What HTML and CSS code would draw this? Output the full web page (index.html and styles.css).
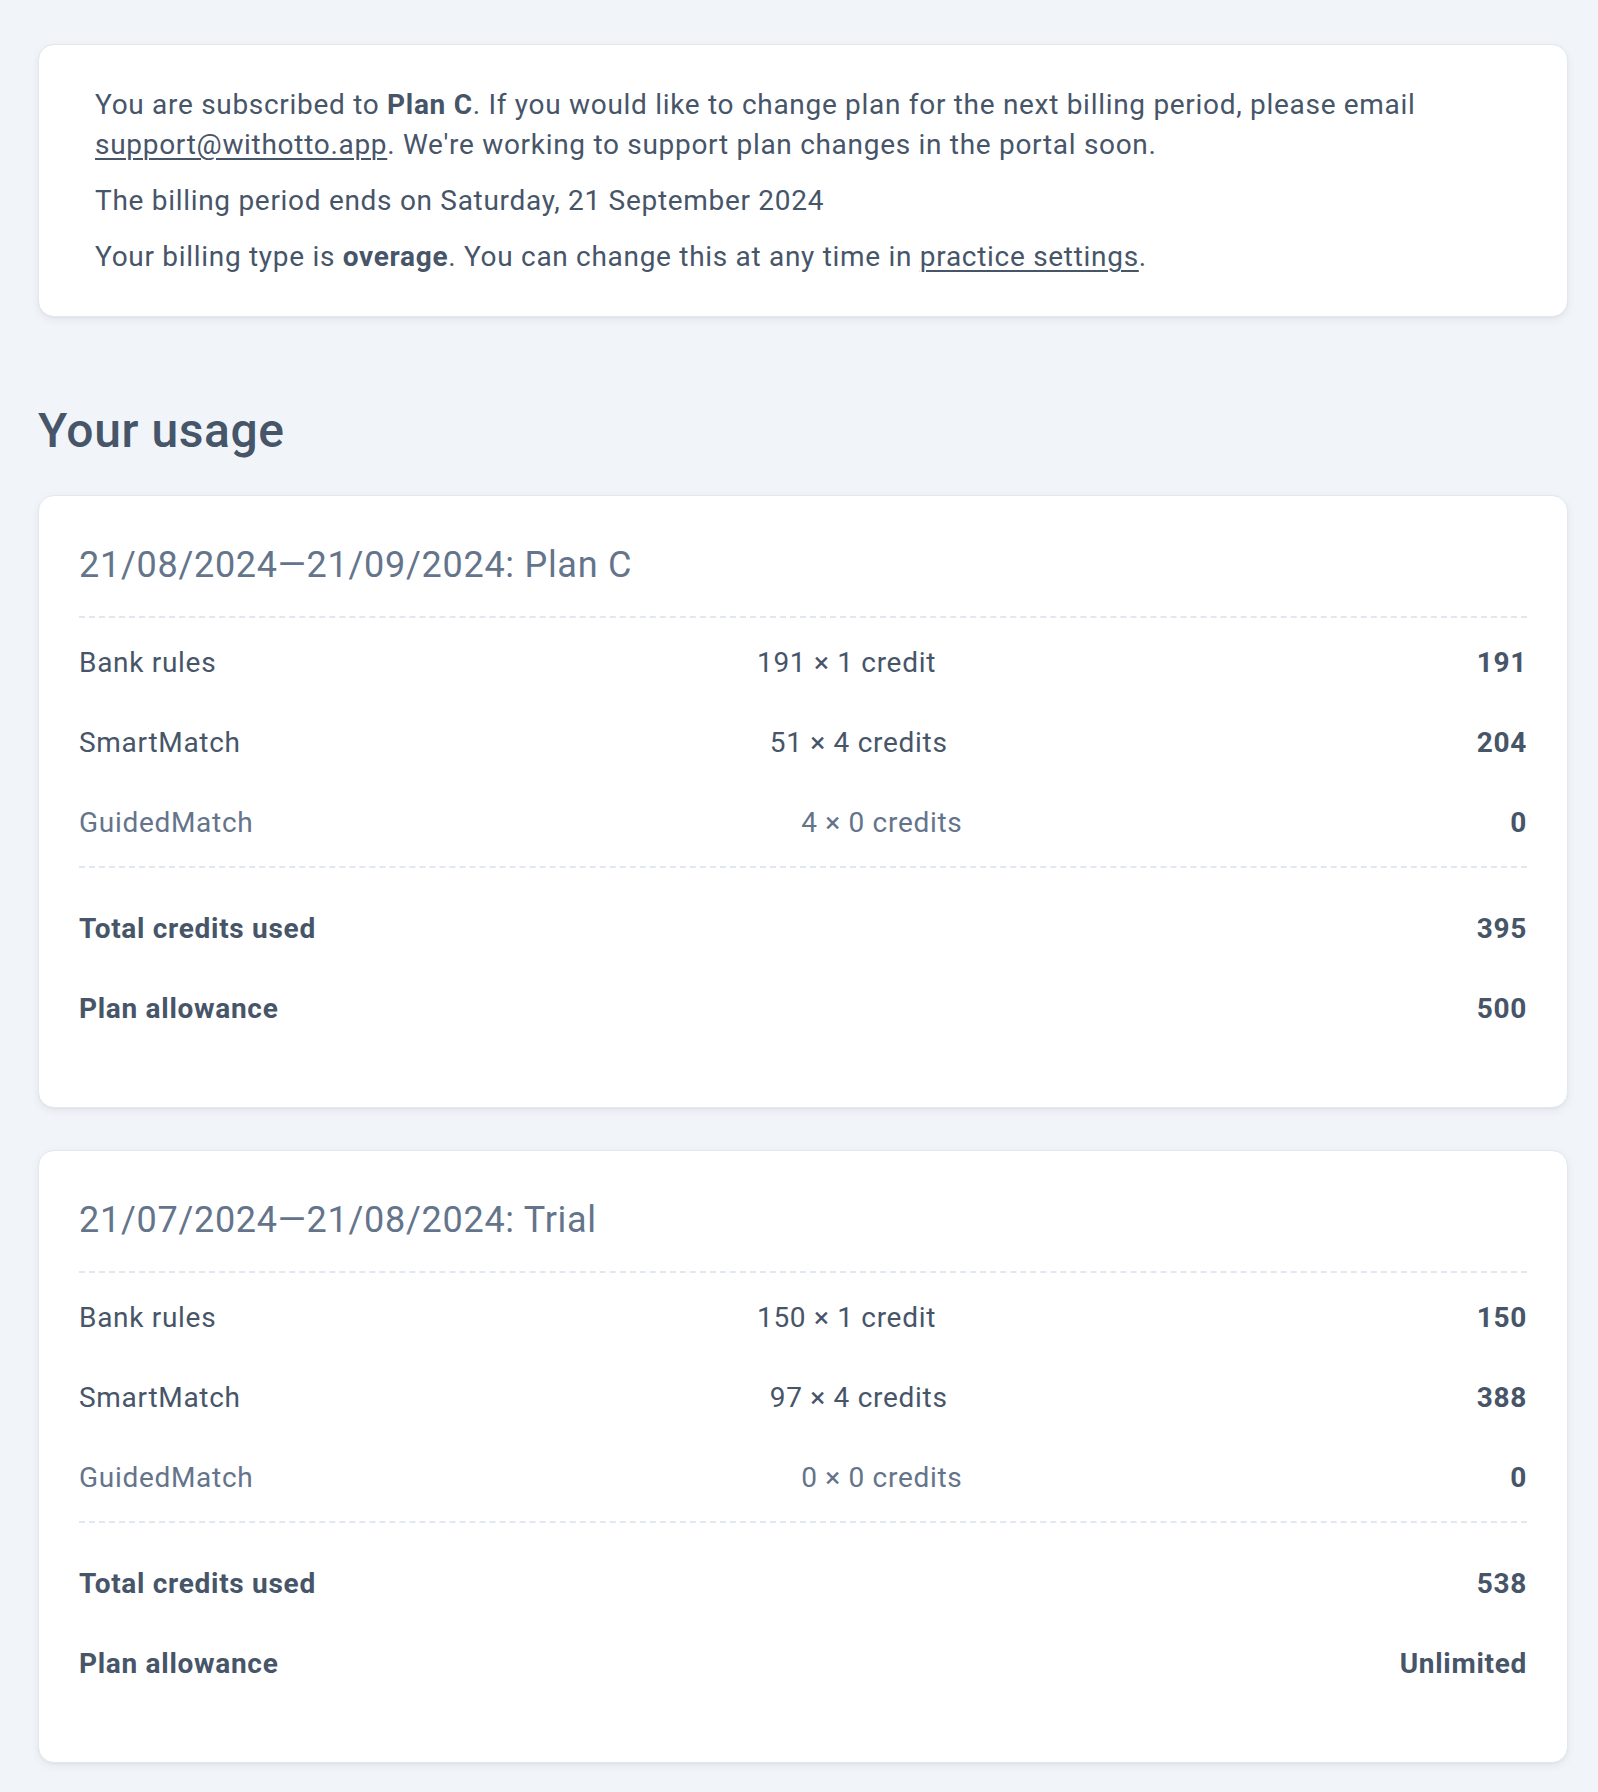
FILE: index.html
```html
<!DOCTYPE html>
<html lang="en">
<head>
<meta charset="utf-8">
<title>Billing</title>
<link rel="stylesheet" href="styles.css">
</head>
<body>
<main class="page">
  <section class="card info-card">
    <p>You are subscribed to <strong>Plan C</strong>. If you would like to change plan for the next billing period, please email <a href="#">support@withotto.app</a>. We're working to support plan changes in the portal soon.</p>
    <p>The billing period ends on Saturday, 21 September 2024</p>
    <p>Your billing type is <strong>overage</strong>. You can change this at any time in <a href="#">practice settings</a>.</p>
  </section>

  <h2 class="section-title">Your usage</h2>

  <section class="card usage-card">
    <h3 class="period-title">21/08/2024—21/09/2024: Plan C</h3>
    <div class="usage-lines">
      <div class="line"><span>Bank rules</span><span>191 × 1 credit</span><span class="amount">191</span></div>
      <div class="line"><span>SmartMatch</span><span>51 × 4 credits</span><span class="amount">204</span></div>
      <div class="line muted"><span>GuidedMatch</span><span>4 × 0 credits</span><span class="amount">0</span></div>
    </div>
    <div class="usage-totals">
      <div class="line"><span class="label">Total credits used</span><span class="amount">395</span></div>
      <div class="line"><span class="label">Plan allowance</span><span class="amount">500</span></div>
    </div>
  </section>

  <section class="card usage-card">
    <h3 class="period-title">21/07/2024—21/08/2024: Trial</h3>
    <div class="usage-lines">
      <div class="line"><span>Bank rules</span><span>150 × 1 credit</span><span class="amount">150</span></div>
      <div class="line"><span>SmartMatch</span><span>97 × 4 credits</span><span class="amount">388</span></div>
      <div class="line muted"><span>GuidedMatch</span><span>0 × 0 credits</span><span class="amount">0</span></div>
    </div>
    <div class="usage-totals">
      <div class="line"><span class="label">Total credits used</span><span class="amount">538</span></div>
      <div class="line"><span class="label">Plan allowance</span><span class="amount">Unlimited</span></div>
    </div>
  </section>
</main>
</body>
</html>
```

FILE: styles.css
```css
* { box-sizing: border-box; }

html, body {
  margin: 0;
  padding: 0;
  background: #f1f5f9;
}

body {
  font-family: Roboto, "Noto Sans", "Liberation Sans", sans-serif;
  color: #475569;
  font-size: 28px;
  line-height: 40px;
  letter-spacing: 0.025em;
}

.page {
  padding: 44px 30px 28px 38px;
}

.card {
  background: #ffffff;
  border: 1px solid #e2e8f0;
  border-radius: 16px;
  box-shadow: 0 3px 10px rgba(15, 23, 42, 0.06), 0 1px 2px rgba(15, 23, 42, 0.04);
}

.info-card {
  padding: 40px 56px 39px;
}

.info-card p {
  margin: 0 0 16px;
}

.info-card p:last-child {
  margin-bottom: 0;
}

.info-card strong {
  font-weight: 700;
}

.info-card a {
  color: inherit;
  text-decoration: underline;
  text-underline-offset: 4px;
  text-decoration-thickness: 1.5px;
}

.section-title {
  margin: 86px 0 36px;
  font-size: 48px;
  line-height: 56px;
  font-weight: 500;
  letter-spacing: 0.012em;
  color: #475569;
}

.usage-card {
  padding: 40px;
  margin-bottom: 42px;
}

.usage-card:last-child {
  margin-bottom: 0;
}

.period-title {
  margin: 0;
  padding: 0 0 22px;
  font-size: 36px;
  line-height: 58px;
  font-weight: 400;
  letter-spacing: 0.02em;
  color: #64748b;
  border-bottom: 2px dashed #e2e8f0;
}

.usage-lines {
  padding: 5px 0 3px;
  border-bottom: 2px dashed #e2e8f0;
}

.usage-totals {
  padding: 21px 0 18px;
}

.line {
  display: flex;
  justify-content: space-between;
  align-items: center;
  padding: 20px 0;
}

.line.muted {
  color: #64748b;
}

.amount {
  font-weight: 700;
  color: #475569;
}

.label {
  font-weight: 700;
}
```
